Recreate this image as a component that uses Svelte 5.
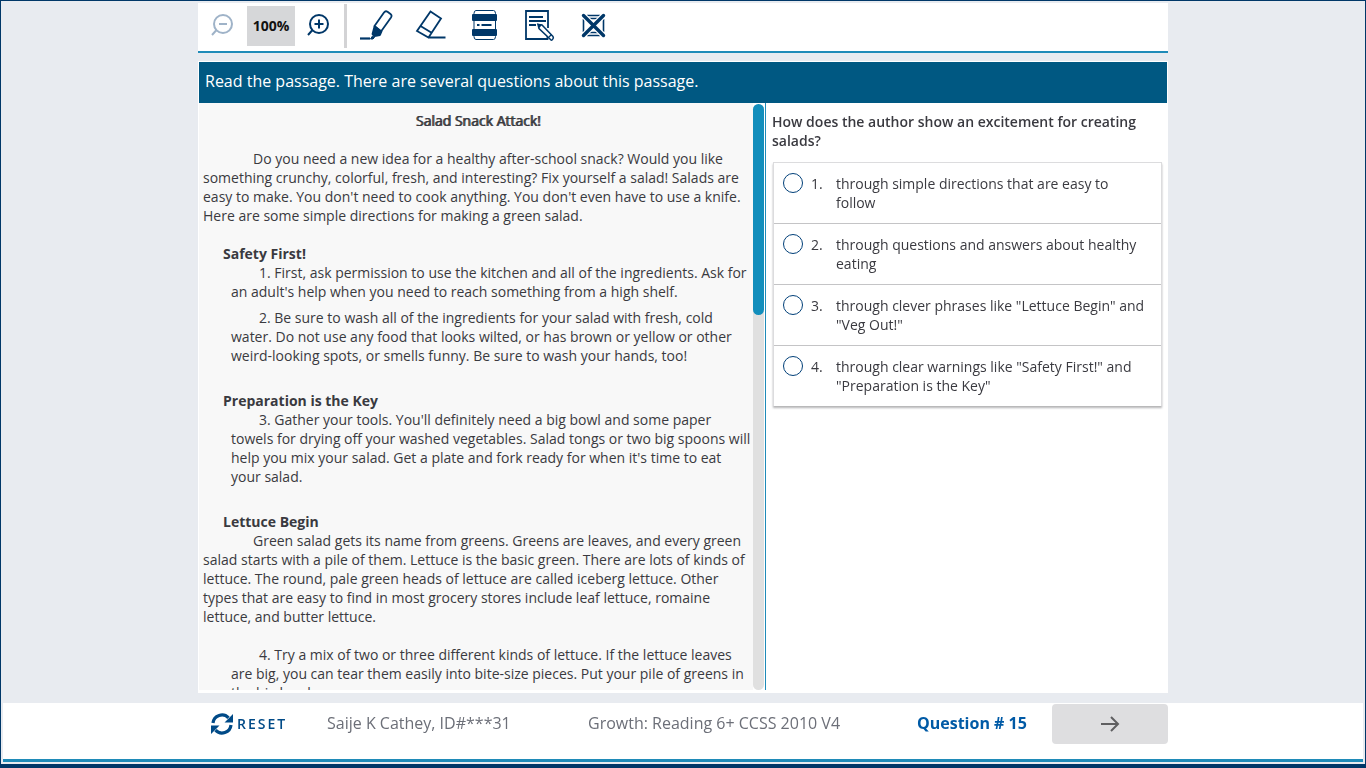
<script>
  const choices = [
    'through simple directions that are easy to follow',
    'through questions and answers about healthy eating',
    'through clever phrases like "Lettuce Begin" and "Veg Out!"',
    'through clear warnings like "Safety First!" and "Preparation is the Key"'
  ];
  let selected = $state(null);
</script>

<div class="frame">
  <header class="toolbar">
    <button class="tool zoom" aria-label="Zoom out" disabled>
      <svg width="24" height="24" viewBox="0 0 24 24" fill="none" stroke="#9fb3c8" stroke-width="2">
        <circle cx="12" cy="10" r="9" /><path d="M8 10h8M5.500 16l-4.500 5" />
      </svg>
    </button>
    <output class="level">100%</output>
    <button class="tool zoom" aria-label="Zoom in">
      <svg width="24" height="24" viewBox="0 0 24 24" fill="none" stroke="#003768" stroke-width="2">
        <circle cx="12" cy="10" r="9" /><path d="M7.500 10h9M12 5.500v9M5.500 16l-4.500 5" />
      </svg>
    </button>
    <span class="rule"></span>
    <button class="tool" aria-label="Highlighter">
      <svg width="34" height="32" viewBox="0 1 34 32" fill="none" stroke="#003768" stroke-width="1.800" stroke-linejoin="round">
        <path d="M14.500 17L24 3.500Q25.500 1.500 27.500 2.800L30.500 5Q32.300 6.500 31 8.500L21 22.500z" />
        <path d="M14.500 17.500l7 5-1.500 3.500-5.500 1-2-2z" fill="#003768" />
        <path d="M0 29.500h10" stroke-width="2.200" /><path d="M12.500 27l2 1.500-1.500 1.500h-2.500z" fill="#003768" stroke-width="1" />
      </svg>
    </button>
    <button class="tool" aria-label="Eraser">
      <svg width="34" height="32" viewBox="-1 1 34 32" fill="none" stroke="#003768" stroke-width="1.800">
        <path d="M15.500 2.500L26 9.500 13.500 28.500 2 22zM5.500 17l11.500 7M14 28.500h16.500" />
      </svg>
    </button>
    <button class="tool" aria-label="Line reader">
      <svg width="34" height="32" viewBox="0 1 34 32" fill="none" stroke="#003768">
        <path d="M8 1.500h17.500q2 0 2 3v23q0 3-2 3H8q-2 0-2-3v-23q0-3 2-3z" />
        <rect x="4" y="5" width="25" height="7" rx="1" fill="#003768" stroke="none" />
        <rect x="4" y="20" width="25" height="7" rx="1" fill="#003768" stroke="none" />
        <path d="M9 16h2.500M13.500 16h10" stroke-width="2" />
      </svg>
    </button>
    <button class="tool" aria-label="Notepad">
      <svg width="34" height="32" viewBox="-1 1 34 32" fill="none" stroke="#003768" stroke-width="1.800">
        <path d="M25 19V2H3v28h21.500v-3M6 8h14M6 12h17M6 16h7" />
        <path d="M15 15.500l4 .5 11 11.500q1 1.500-.5 3t-2.500-.5L16 19.500z" fill="#fff" stroke-width="1.500" />
        <path d="M14 14.500l5 1-2.500 3.500z" fill="#003768" stroke="none" /><path d="M26 28l2.500-2.500" stroke-width="1.200" />
      </svg>
    </button>
    <button class="tool" aria-label="Answer eliminator">
      <svg width="34" height="32" viewBox="0 1 34 32" fill="none">
        <path d="M11 6.500h13M11 26.500h13M7.500 10v13M27.500 10v13M12 9.500h11M12 23.500h11" stroke="#003768" stroke-width="1.600" />
        <path d="M7 6l21 21M28 6l-21 21" stroke="#fff" stroke-width="6" />
        <path d="M7.500 6.500l20 20M27.500 6.500l-20 20" stroke="#003768" stroke-width="3.400" stroke-linecap="round" />
      </svg>
    </button>
  </header>

  <main class="sheet">
    <h1 class="banner">Read the passage. There are several questions about this passage.</h1>
    <div class="panes">
      <article class="passage">
        <h2>Salad Snack Attack!</h2>
        <p class="intro">Do you need a new idea for a healthy after-school snack? Would you like something crunchy, colorful, fresh, and interesting? Fix yourself a salad! Salads are easy to make. You don't need to cook anything. You don't even have to use a knife. Here are some simple directions for making a green salad.</p>
        <h3>Safety First!</h3>
        <p class="step">1. First, ask permission to use the kitchen and all of the ingredients. Ask for an adult's help when you need to reach something from a high shelf.</p>
        <p class="step">2. Be sure to wash all of the ingredients for your salad with fresh, cold water. Do not use any food that looks wilted, or has brown or yellow or other weird-looking spots, or smells funny. Be sure to wash your hands, too!</p>
        <h3>Preparation is the Key</h3>
        <p class="step">3. Gather your tools. You'll definitely need a big bowl and some paper towels for drying off your washed vegetables. Salad tongs or two big spoons will help you mix your salad. Get a plate and fork ready for when it's time to eat your salad.</p>
        <h3>Lettuce Begin</h3>
        <p class="lead">Green salad gets its name from greens. Greens are leaves, and every green salad starts with a pile of them. Lettuce is the basic green. There are lots of kinds of lettuce. The round, pale green heads of lettuce are called iceberg lettuce. Other types that are easy to find in most grocery stores include leaf lettuce, romaine lettuce, and butter lettuce.</p>
        <p class="step">4. Try a mix of two or three different kinds of lettuce. If the lettuce leaves are big, you can tear them easily into bite-size pieces. Put your pile of greens in the big bowl.</p>
      </article>
      <div class="track"><div class="thumb"></div></div>
      <form class="question">
        <fieldset>
          <legend>How does the author show an excitement for creating salads?</legend>
          <div class="choices">
            {#each choices as choice, i}
              <label class="choice">
                <input type="radio" name="answer" value={i} bind:group={selected} />
                <span>{i + 1}.</span>
                <span>{choice}</span>
              </label>
            {/each}
          </div>
        </fieldset>
      </form>
    </div>
  </main>

  <footer>
    <div class="status">
      <button class="reset">
        <svg width="22" height="22" viewBox="0 0 22 22" fill="none" stroke="#004a87" stroke-width="3.200">
          <path d="M2 10A9 9 0 0 1 17.500 4.800M20 12A9 9 0 0 1 4.500 17.200" />
          <path d="M22 1v8.500h-8.500zM0 21v-8.500h8.500z" fill="#004a87" stroke="none" />
        </svg>
        <span>RESET</span>
      </button>
      <span class="student">Saije K Cathey, ID#***31</span>
      <span class="test">Growth: Reading 6+ CCSS 2010 V4</span>
      <strong>Question # 15</strong>
      <button class="next" aria-label="Next question">
        <svg width="20" height="20" viewBox="0 0 20 20" fill="none" stroke="#5f5f61" stroke-width="2"><path d="M1 10h17M11 3l7 7-7 7" /></svg>
      </button>
    </div>
  </footer>
</div>

<style>
  :global(body) { background: #e8ebf0; }
  * { box-sizing: border-box; }
  .frame {
    display: flex;
    flex-direction: column;
    height: 100vh;
    border: 1px solid #003768;
    border-bottom: 4px solid #003768;
    padding: 2px;
    background: #e8ebf0;
    color: #3a3a40;
    font: 14px/19px "Open Sans", sans-serif;
  }
  button { border: 0; padding: 0; background: none; font: inherit; cursor: pointer; }
  svg { display: block; }
  .toolbar, .sheet, .status { width: 100%; max-width: 970px; margin: 0 auto; }
  .toolbar {
    display: flex;
    align-items: center;
    height: 50px;
    flex-shrink: 0;
    padding: 0 0 2px 1px;
    background: #fff;
    border-bottom: 2px solid #1f8bb8;
  }
  .zoom { padding: 0 12px; }
  .level {
    width: 48px;
    font-weight: 700;
    line-height: 40px;
    text-align: center;
    color: #111;
    background: #d6d7d9;
  }
  .rule { width: 3px; height: 44px; margin: 0 13px 0 1px; background: #d3d3d5; }
  .tool + .tool { margin-left: 20px; }
  .sheet {
    display: flex;
    flex-direction: column;
    flex: 1;
    min-height: 0;
    margin-top: 8px;
    padding: 1px 1px 3px;
    background: #fff;
  }
  .banner {
    margin: 0;
    padding: 8px 6px 11px;
    font-size: 16px;
    font-weight: 400;
    line-height: 22px;
    color: #fff;
    background: #005882;
  }
  .panes {
    display: grid;
    grid-template: minmax(0, 1fr) / minmax(0, 554fr) 12px minmax(0, 402fr);
    flex: 1;
    min-height: 0;
  }
  .passage { overflow-y: auto; scrollbar-width: none; padding: 8px 0 0 4px; background: #f8f8f8; }
  h2, h3 { margin: 0; font-size: 14px; line-height: 19px; font-weight: 700; }
  h2 { text-align: center; font-weight: 400; text-shadow: 1px 0 currentColor; }
  h3 { margin: 19px 0 0 20px; }
  p { margin: 0; }
  .intro { margin-top: 19px; text-indent: 50px; }
  .lead { text-indent: 50px; }
  .step { margin-left: 28px; padding-bottom: 7px; text-indent: 28px; }
  .lead + .step { margin-top: 19px; }
  .track { margin: 1px 1px 0 0; border-radius: 6px; background: #e0e0e0; }
  .thumb { height: 36%; border-radius: 6px; background: #128ebc; }
  .question { border-left: 1px solid #1f8bb8; padding: 9px 5px 0 6px; }
  fieldset { border: 0; margin: 0; padding: 0; min-width: 0; }
  legend { padding: 0; font-weight: 600; }
  .choices {
    margin: 12px 0 0 1px;
    border: 1px solid #dcdcde;
    border-bottom: 0;
    box-shadow: 0 2px 2px #b4b4b6;
  }
  .choice { display: flex; padding: 11px 12px 11px 9px; }
  .choice + .choice { border-top: 1px solid #c4c4c6; }
  .choice span:nth-of-type(1) { width: 25px; flex-shrink: 0; }
  input {
    appearance: none;
    flex-shrink: 0;
    width: 20px;
    height: 20px;
    margin: -1px 8px 0 0;
    border: 1px solid #003f78;
    border-radius: 50%;
    background: #fff;
  }
  input:checked { background: #003f78; box-shadow: inset 0 0 0 4px #fff; }
  footer { margin-top: 10px; background: #fff; border-bottom: 3px solid #1f8bb8; }
  .status { display: flex; align-items: center; padding: 1px 0 15px; font-size: 16px; color: #6c6f78; }
  .status span, strong { padding-bottom: 2px; }
  .reset {
    display: flex;
    align-items: center;
    gap: 4px;
    width: 116px;
    margin-left: 13px;
    font-size: 14px;
    font-weight: 600;
    letter-spacing: 2px;
    color: #004a87;
  }
  .student { flex: 261; }
  .test { flex: 329; }
  strong { width: 135px; color: #005aa6; }
  .next {
    display: grid;
    place-items: center;
    width: 116px;
    height: 40px;
    border-radius: 4px;
    background: #dedee0;
  }
</style>
